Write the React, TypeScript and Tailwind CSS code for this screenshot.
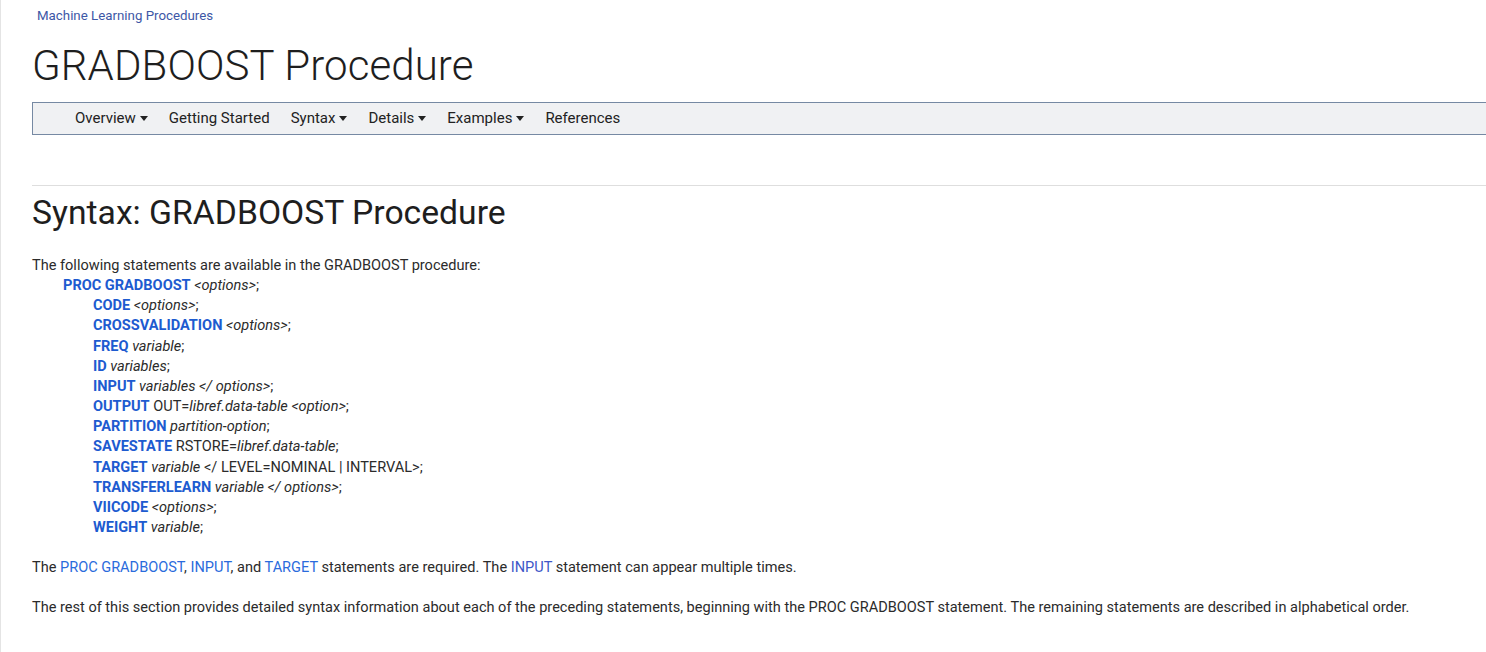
import React from "react";

const kw = "font-bold text-[#1d5bd0]";
const lk = "text-[#2a6bdc]";

function Caret() {
  return (
    <svg width="8" height="5" viewBox="0 0 8 5" className="ml-[4px] inline-block">
      <path d="M0 0h8L4 5z" fill="#222" />
    </svg>
  );
}

export default function App() {
  const rows: React.ReactNode[] = [
    <><span className={kw}>CODE</span> <i>&lt;options&gt;</i>;</>,
    <><span className={kw}>CROSSVALIDATION</span> <i>&lt;options&gt;</i>;</>,
    <><span className={kw}>FREQ</span> <i>variable</i>;</>,
    <><span className={kw}>ID</span> <i>variables</i>;</>,
    <><span className={kw}>INPUT</span> <i>variables &lt;/ options&gt;</i>;</>,
    <><span className={kw}>OUTPUT</span> OUT=<i>libref.data-table &lt;option&gt;</i>;</>,
    <><span className={kw}>PARTITION</span> <i>partition-option</i>;</>,
    <><span className={kw}>SAVESTATE</span> RSTORE=<i>libref.data-table</i>;</>,
    <><span className={kw}>TARGET</span> <i>variable</i> &lt;/ LEVEL=NOMINAL | INTERVAL&gt;;</>,
    <><span className={kw}>TRANSFERLEARN</span> <i>variable &lt;/ options&gt;</i>;</>,
    <><span className={kw}>VIICODE</span> <i>&lt;options&gt;</i>;</>,
    <><span className={kw}>WEIGHT</span> <i>variable</i>;</>,
  ];
  return (
    <div className="min-h-[652px] w-[1486px] overflow-hidden bg-white border-l border-[#e4e4e4] font-['Roboto',sans-serif] text-[#2b2b2b]">
      <div className="pl-[31px]">
        <div className="pt-[6px] pl-[5px] text-[13.3px] leading-[20px] text-[#3d57a6]">Machine Learning Procedures</div>
        <h1 className="mt-[16px] text-[42px] leading-[48px] font-light text-[#1e1e1e] tracking-[0.1px]">GRADBOOST Procedure</h1>
        <div className="mt-[12px] h-[33px] border border-r-0 border-[#7689a3] bg-[#f0f1f3] flex items-center pl-[42px] gap-[21px] text-[15px] text-[#222]">
          <span className="flex items-center">Overview<Caret /></span>
          <span>Getting Started</span>
          <span className="flex items-center">Syntax<Caret /></span>
          <span className="flex items-center">Details<Caret /></span>
          <span className="flex items-center">Examples<Caret /></span>
          <span>References</span>
        </div>
        <div className="mt-[50px] border-t border-[#dedede]" />
        <h2 className="mt-[7px] text-[33.7px] leading-[40px] font-normal text-[#1e1e1e]">Syntax: GRADBOOST Procedure</h2>
        <div className="mt-[23px] text-[14.55px] leading-[20.15px]">
          <div>The following statements are available in the GRADBOOST procedure:</div>
          <div className="pl-[31px]">
            <span className={kw}>PROC GRADBOOST</span> <i>&lt;options&gt;</i>;
          </div>
          {rows.map((r, i) => (
            <div key={i} className="pl-[61px]">{r}</div>
          ))}
          <div className="mt-[20px]">
            The <span className={lk}>PROC GRADBOOST</span>, <span className={lk}>INPUT</span>, and <span className={lk}>TARGET</span> statements are required. The <span className="text-[#4057c8]">INPUT</span> statement can appear multiple times.
          </div>
          <div className="mt-[20px]">
            The rest of this section provides detailed syntax information about each of the preceding statements, beginning with the PROC GRADBOOST statement. The remaining statements are described in alphabetical order.
          </div>
        </div>
      </div>
    </div>
  );
}
